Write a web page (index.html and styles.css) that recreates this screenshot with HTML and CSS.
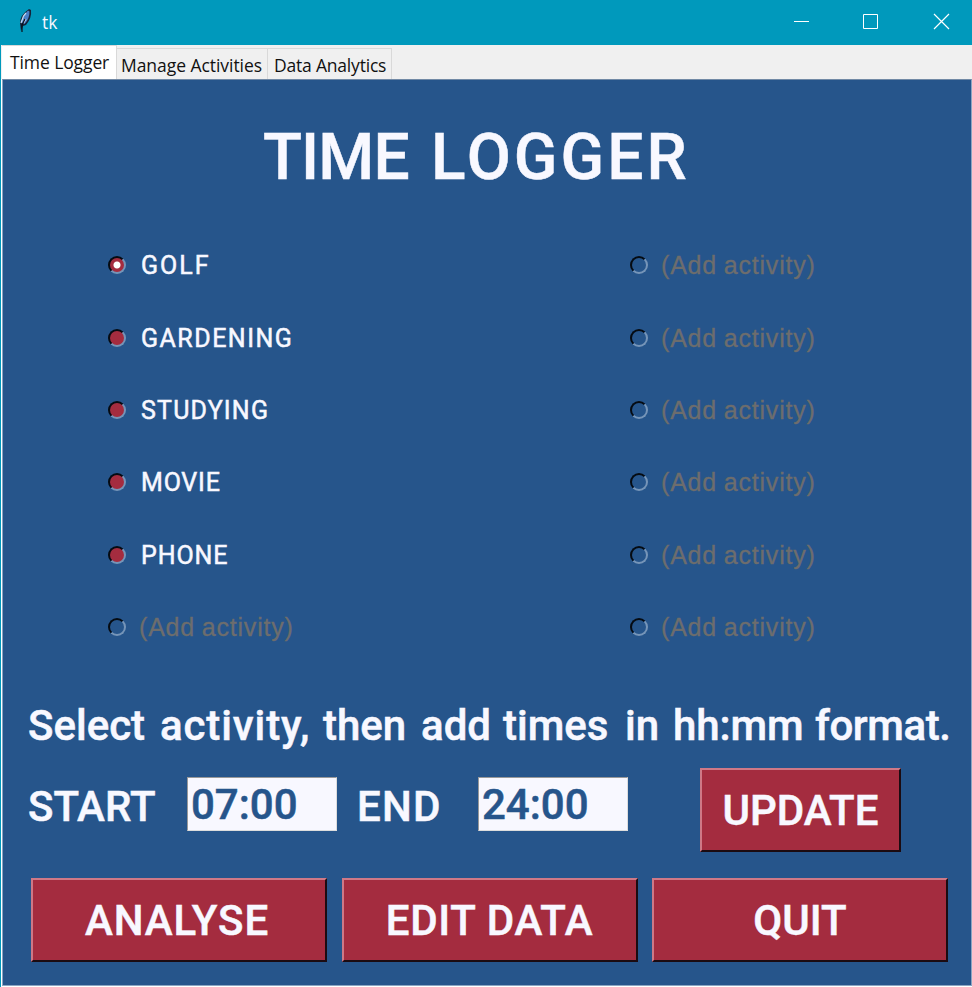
FILE: index.html
```
<!DOCTYPE html>
<html lang="en">
<head>
<meta charset="utf-8">
<title>tk</title>
<link rel="stylesheet" href="styles.css">
</head>
<body>
<div class="window">
  <header class="titlebar">
    <svg class="feather" width="16" height="26" viewBox="0 0 16 26">
      <path d="M4 23L3 15Q3 7 12 1L14 2Q15 10 9 17L6 18Z" fill="#14233a"/>
      <path d="M4.500 15Q5 8 11 2.500L12.500 3.500Q12.500 11 7.500 16Z" fill="#4a80c9"/>
      <path d="M4 15L6.500 8L9 5M6.500 15L9 11" fill="none" stroke="#c4daf2" stroke-width="1.300"/>
      <path d="M8 11L5 17L5 24" fill="none" stroke="#0b1018" stroke-width="1.200"/>
    </svg>
    <span class="caption">tk</span>
    <svg class="controls" width="158" height="20" viewBox="0 0 158 20" fill="none" stroke="#fff">
      <path d="M0 8.500H15M69.500 1.500H83.500V15.500H69.500Z"/>
      <path d="M140 1L155 16M155 1L140 16" stroke-width="1.200"/>
    </svg>
  </header>
  <nav class="tabs">
    <div class="tab active">Time Logger</div>
    <div class="tab manage">Manage Activities</div>
    <div class="tab data">Data Analytics</div>
  </nav>
  <main class="panel">
    <h1><span class="time">TIME</span> <span class="logger">LOGGER</span></h1>
    <div class="activities">
      <div class="option golf"><i class="radio on picked"></i><span>GOLF</span></div>
      <div class="option empty"><i class="radio"></i><span>(Add activity)</span></div>
      <div class="option"><i class="radio on"></i><span>GARDENING</span></div>
      <div class="option empty"><i class="radio"></i><span>(Add activity)</span></div>
      <div class="option studying"><i class="radio on"></i><span>STUDYING</span></div>
      <div class="option empty"><i class="radio"></i><span>(Add activity)</span></div>
      <div class="option movie"><i class="radio on"></i><span>MOVIE</span></div>
      <div class="option empty"><i class="radio"></i><span>(Add activity)</span></div>
      <div class="option phone"><i class="radio on"></i><span>PHONE</span></div>
      <div class="option empty"><i class="radio"></i><span>(Add activity)</span></div>
      <div class="option empty"><i class="radio"></i><span>(Add activity)</span></div>
      <div class="option empty"><i class="radio"></i><span>(Add activity)</span></div>
    </div>
    <p class="hint"><span>Select</span> <span class="loose">activity,</span> <span>then</span> <span>add</span> <span>times</span> <span>in</span> <span class="snug">hh:mm</span> <span class="tight">format.</span></p>
    <div class="times">
      <label class="start">START</label>
      <div class="entry">07:00</div>
      <label class="end">END</label>
      <div class="entry">24:00</div>
      <div class="button update">UPDATE</div>
    </div>
    <div class="actions">
      <div class="button analyse">ANALYSE</div>
      <div class="button edit">EDIT DATA</div>
      <div class="button">QUIT</div>
    </div>
  </main>
</div>
</body>
</html>
```
FILE: styles.css
```
* { box-sizing: border-box; }
body { margin: 0; background: #fff; }
.window { width: 972px; height: 987px; border-left: 1px solid #0099bc; background: #fff; font-family: Roboto, sans-serif; color: #f8f8ff; overflow: hidden; }
.titlebar { height: 45px; background: #0099bc; display: flex; align-items: center; padding-left: 16px; }
.feather { margin-bottom: 4px; }
.caption { font: 17.5px/24px "Open Sans", sans-serif; margin: 0 0 2px 9px; }
.controls { margin-left: auto; margin-right: 20px; }
.tabs { height: 34px; background: #f0f0f0; display: flex; align-items: flex-end; padding-left: 1px; font: 17.5px/24px "Open Sans", sans-serif; color: #111; white-space: nowrap; }
.tab { height: 31px; border: 1px solid #d9d9d9; border-bottom: 0; border-left: 0; padding: 4px 0 0 4px; width: 151px; }
.tab.active { height: 34px; width: 115px; background: #fff; padding: 4px 0 0 8px; letter-spacing: -0.1px; }
.tab.manage { letter-spacing: -0.05px; }
.tab.data { width: 124px; padding-left: 6px; letter-spacing: -0.2px; }
.panel { margin-left: 1px; height: 907px; background: #26558b; border: 1px solid #8ba5c2; border-top-color: #7189a5; -webkit-text-stroke: 0.5px; }
h1 { margin: 0; height: 149px; padding: 40px 0 0 260px; font-size: 64px; line-height: 76px; font-weight: 500; display: flex; white-space: nowrap; }
.time { width: 168px; letter-spacing: -0.9px; }
.logger { letter-spacing: 3.1px; }
.activities { display: grid; grid-template-columns: 522px 1fr; grid-template-rows: repeat(6, 72.4px); padding-left: 105px; height: 435px; }
.option { display: flex; align-items: center; font-size: 25px; gap: 15px; letter-spacing: 1.5px; }
.option span { padding-top: 1px; }
.golf { letter-spacing: 2px; }
.studying { letter-spacing: 1.2px; }
.movie { letter-spacing: 0.8px; }
.phone { letter-spacing: 0.9px; }
.empty { font: 25px "Liberation Sans", sans-serif; color: #6d6d6d; gap: 13px; letter-spacing: 0.8px; word-spacing: -1px; -webkit-text-stroke: 0.3px; }
.radio { width: 18px; height: 18px; border-radius: 50%; border: 2px solid; border-color: #050b12 #7695b8 #7695b8 #050b12; }
.on { background: #a42c3f; }
.picked { background: radial-gradient(circle, #fff 3px, #a42c3f 4px); }
.hint { margin: 32px 0 0; height: 60px; padding-left: 25px; font-size: 42px; line-height: 60px; font-weight: 500; white-space: nowrap; display: grid; grid-template-columns: 132px 163px 98px 82px 122px 48px 142px 1fr; }
.loose { letter-spacing: 0.9px; }
.snug { letter-spacing: -0.1px; }
.tight { letter-spacing: -0.4px; }
.times { height: 84px; margin-top: 12px; display: flex; align-items: center; padding-left: 26px; font-size: 42px; font-weight: 500; }
.start { width: 159px; margin: -8px 0 0 -1px; flex: none; }
.end { width: 119px; margin: -8px 0 0 22px; text-indent: -2px; letter-spacing: 1.2px; }
.entry { width: 150px; height: 54px; border: 1px solid #999; border-right-color: #ddd; border-bottom-color: #ddd; background: #f8f8ff; color: #26558b; line-height: 53px; padding-left: 3px; margin-top: -12px; }
.button { display: flex; align-items: center; justify-content: center; height: 84px; background: #a42c3f; border: 2px solid; border-color: #cf7886 #1b0b11 #1b0b11 #cf7886; font-size: 42px; font-weight: 500; }
.analyse { letter-spacing: 0.9px; padding-right: 4px; }
.edit { letter-spacing: 0.7px; }
.update { width: 201px; margin-left: 72px; }
.actions { display: grid; grid-template-columns: repeat(3, 296px); gap: 14.5px; padding-left: 28px; margin-top: 26px; }
```
